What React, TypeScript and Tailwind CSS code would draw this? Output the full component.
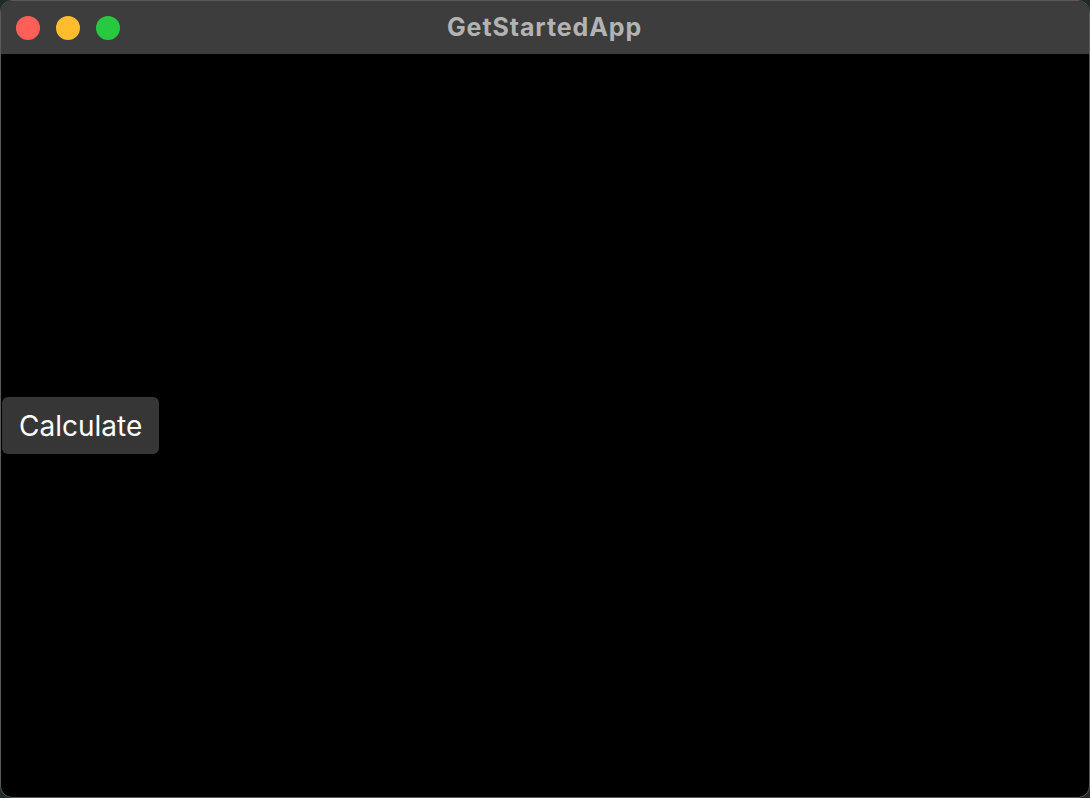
const TrafficLights = () => (
  <div className="flex items-center gap-4 pl-[15px]">
    <span className="w-6 h-6 rounded-full bg-[#fe5f57]" />
    <span className="w-6 h-6 rounded-full bg-[#febc2e]" />
    <span className="w-6 h-6 rounded-full bg-[#28c840]" />
  </div>
);

export default function App() {
  return (
    <div className="w-[1090px] h-[798px] bg-[#1f2a2a]" style={{ fontFamily: 'Inter, "Noto Sans", sans-serif' }}>
      <div className="w-full h-full rounded-[12px] border border-[#5a5a5a] overflow-hidden flex flex-col bg-black">
        {/* Title bar */}
        <div className="relative h-[53px] shrink-0 bg-[#3d3d3d] flex items-center">
          <TrafficLights />
          <div className="absolute inset-0 flex items-center justify-center pointer-events-none">
            <span className="text-[25px] font-bold text-[#b3b3b3] tracking-[0.9px] pr-px">GetStartedApp</span>
          </div>
        </div>

        {/* Content */}
        <div className="flex-1 flex items-center pl-px">
          <button className="h-[57px] w-[157px] rounded-[6px] bg-[#363636] text-white text-[28px] flex items-center justify-start pl-[17px] pt-px">
            Calculate
          </button>
        </div>
      </div>
    </div>
  );
}
